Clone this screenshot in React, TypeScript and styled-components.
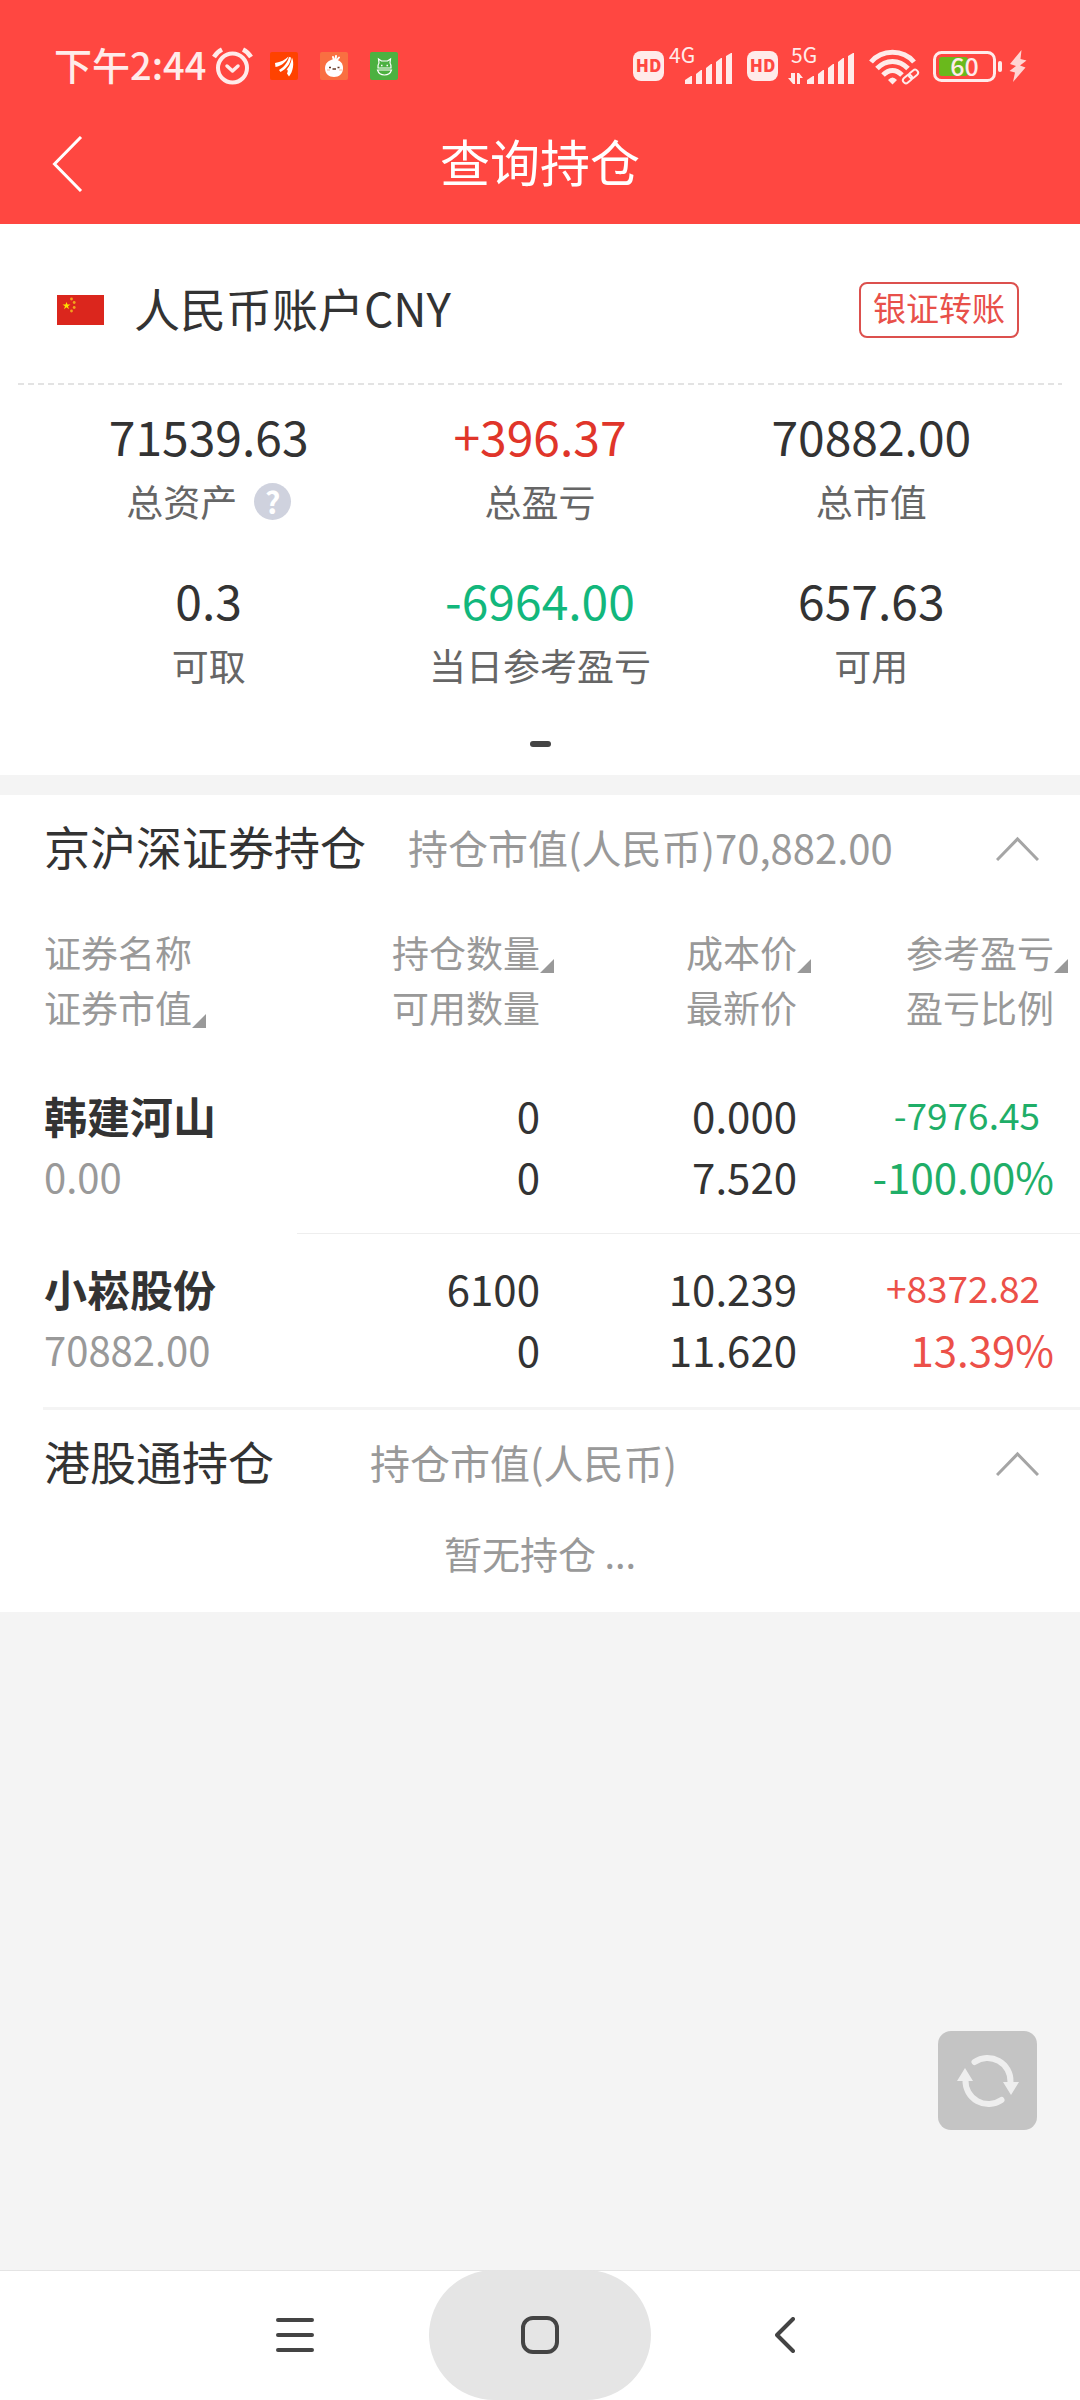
import React from "react";
import styled, { createGlobalStyle } from "styled-components";

const Global = createGlobalStyle`
  *, *::before, *::after { box-sizing: border-box; }
  html, body { margin: 0; padding: 0; background: #f4f4f4; }
  body { font-family: "Noto Sans CJK SC", sans-serif; color: #333; }
  button { font: inherit; color: inherit; background: none; border: 0; padding: 0; margin: 0; cursor: pointer; }
  h1, h2, p, dl, dd, dt { margin: 0; font-weight: 400; }
  svg { display: block; flex: none; }
`;

const Page = styled.div`
  min-height: 100vh;
  display: flex;
  flex-direction: column;
`;

const Header = styled.header`
  background: #ff4741;
  color: #fff;
`;

const StatusBar = styled.div`
  height: 104px;
  padding: 28px 53px 0 54px;
  display: flex;
  align-items: center;
  justify-content: space-between;
  color: #ffebea;
`;

const StatusGroup = styled.div<{ $gap: number }>`
  display: flex;
  align-items: center;
  gap: ${(p) => p.$gap}px;
`;

const Clock = styled.span`
  padding-bottom: 4px;
  font-size: 38px;
  line-height: 44px;
  font-weight: 500;
  margin-right: 6px;
`;

const AppIcons = styled.div`
  display: flex;
  gap: 22px;
  margin-left: 17px;
`;

const HdBadge = styled.span`
  width: 31px;
  height: 30px;
  border-radius: 8px;
  background: #ffebea;
  color: #ff4741;
  font-size: 17px;
  line-height: 28px;
  font-weight: 900;
  text-align: center;
`;

const TitleBar = styled.div`
  height: 120px;
  padding: 0 48px;
  display: grid;
  grid-template-columns: 80px 1fr 80px;
  align-items: center;
`;

const BackButton = styled.button`
  height: 80px;
  display: flex;
  align-items: center;
`;

const PageTitle = styled.h1`
  padding-bottom: 8px;
  font-size: 50px;
  line-height: 64px;
  text-align: center;
`;

const Card = styled.section`
  background: #fff;
`;

const AccountRow = styled.div`
  height: 159px;
  padding: 13px 61px 0 57px;
  display: flex;
  align-items: center;
`;

const AccountName = styled.h2`
  flex: 1;
  margin-left: 30px;
  padding-bottom: 7px;
  font-size: 46px;
  line-height: 60px;
`;

const TransferButton = styled.button`
  height: 56px;
  width: 160px;
  padding-bottom: 6px;
  border: 2px solid #dc504d;
  border-radius: 8px;
  color: #e8504a;
  font-size: 33px;
  line-height: 46px;
`;

const DashedRule = styled.div`
  height: 2px;
  margin: 0 18px;
  background: repeating-linear-gradient(90deg, #e3e3e3 0 6px, transparent 6px 10px);
`;

const Figures = styled.dl`
  display: grid;
  grid-template-columns: repeat(3, 1fr);
  row-gap: 32px;
  padding: 18px 43px 0;
`;

const Figure = styled.div`
  display: flex;
  flex-direction: column-reverse;
  align-items: center;
`;

const FigureLabel = styled.dt`
  display: flex;
  align-items: center;
  gap: 17px;
  font-size: 37px;
  line-height: 68px;
  color: #666;
`;

const FigureValue = styled.dd<{ $color?: string }>`
  font-size: 48px;
  line-height: 64px;
  color: ${(p) => p.$color ?? "#333"};
`;

const HelpButton = styled.button`
  width: 37px;
  height: 37px;
  border-radius: 50%;
  background: #cfd2de;
  color: #fff;
  font-size: 30px;
  line-height: 34px;
  font-weight: 700;
`;

const PagerDot = styled.div`
  width: 21px;
  height: 6px;
  margin: 42px auto 0;
  border-radius: 3px;
  background: #444;
`;

const SummaryCard = styled(Card)`
  padding-bottom: 28px;
  margin-bottom: 20px;
`;

const SectionToggle = styled.button`
  width: 100%;
  height: 106px;
  padding: 0 41px 0 44px;
  display: flex;
  align-items: center;
  text-align: left;
`;

const SectionTitle = styled.span<{ $gap: number }>`
  margin-right: ${(p) => p.$gap}px;
  padding-bottom: 7px;
  font-size: 46px;
  line-height: 60px;
`;

const SectionNote = styled.span`
  flex: 1;
  padding-bottom: 2px;
  font-size: 40px;
  line-height: 60px;
  color: #999;
`;

const Holdings = styled.table`
  width: 100%;
  table-layout: fixed;
  border-collapse: separate;
  border-spacing: 0;
`;

const Col = styled.col<{ $w: string }>`
  width: ${(p) => p.$w};
`;

const HeadCell = styled.th`
  padding: 24px 0 26px;
  font-size: 37px;
  line-height: 55px;
  font-weight: 400;
  text-align: right;
  color: #999;
  &:first-child { padding-left: 44px; text-align: left; }
  &:last-child { padding-right: 26px; }
`;

const HeadLine = styled.div`
  height: 55px;
`;

const SortButton = styled.button`
  position: relative;
  display: inline-block;
  line-height: 55px;
  &::after {
    content: "";
    position: absolute;
    left: 100%;
    bottom: 7px;
    width: 14px;
    height: 14px;
    background: #999;
    clip-path: polygon(100% 0, 100% 100%, 0 100%);
  }
`;

const Cell = styled.td`
  padding: 23px 0 27px;
  font-size: 42px;
  line-height: 61px;
  text-align: right;
  vertical-align: top;
  border-bottom: 1px solid #eee;
  tr:last-child > & { border-bottom-color: transparent; }
  &:last-child { padding-right: 26px; }
`;

const NameCell = styled.th`
  padding: 24px 0 26px 44px;
  text-align: left;
  vertical-align: top;
  font-weight: 400;
`;

const StockName = styled.div`
  height: 61px;
  font-size: 43px;
  line-height: 61px;
  font-weight: 700;
`;

const StockValue = styled.div`
  height: 61px;
  font-size: 40px;
  line-height: 61px;
  color: #999;
`;

const Amount = styled.div`
  height: 61px;
`;

const Profit = styled.div<{ $up: boolean }>`
  height: 61px;
  color: ${(p) => (p.$up ? "#ec5049" : "#1fae68")};
`;

const ProfitAmount = styled(Profit)`
  padding-right: 14px;
  font-size: 37px;
`;

const SectionRule = styled.div`
  height: 3px;
  margin-left: 43px;
  background: #f4f4f4;
`;

const Empty = styled.p`
  height: 96px;
  font-size: 38px;
  line-height: 74px;
  text-align: center;
  color: #999;
`;

const RefreshButton = styled.button`
  position: fixed;
  right: 43px;
  bottom: 270px;
  width: 99px;
  height: 99px;
  border-radius: 13px;
  background: #c4c4c4;
  display: grid;
  place-items: center;
`;

const SystemNav = styled.nav`
  position: sticky;
  bottom: 0;
  height: 130px;
  margin-top: auto;
  padding: 0 16%;
  display: grid;
  grid-template-columns: repeat(3, 1fr);
  justify-items: center;
  background: #fff;
  box-shadow: inset 0 1px 0 #e4e4e4;
  color: #444;
`;

const NavButton = styled.button<{ $active?: boolean }>`
  width: 222px;
  height: 130px;
  border-radius: 65px;
  background: ${(p) => (p.$active ? "#e5e5e5" : "transparent")};
  display: grid;
  place-items: center;
`;

const AlarmIcon = () => (
  <svg width="41" height="38" viewBox="0 0 41 38" fill="none" stroke="currentColor" strokeWidth="4">
    <circle cx="20.500" cy="21" r="14.500" />
    <path d="M2 10Q5 5 10 2.500M39 10Q36 5 31 2.500" strokeWidth="4.500" />
    <path d="M15 19l5.500 5 5.500-5" strokeWidth="3.500" strokeLinecap="round" strokeLinejoin="round" />
  </svg>
);

const PlaneAppIcon = () => (
  <svg width="28" height="28" viewBox="0 0 28 28">
    <rect width="28" height="28" rx="2" fill="#ff4200" />
    <path d="M5 11C11 10 15 8 18.500 4.500C17 9 12 14 5.500 15Z" fill="#fff" />
    <path d="M19 5L21 5.500C20.500 12 16 17 10.500 20L9 18C14 15 18 10 19 5Z" fill="#fff" />
    <path d="M22 5.500C24.500 11 23 20 19 24.500L17 21.500C18 19 18 18.500 17 17.500L13.500 21C18 17 21 12 22 5.500Z" fill="#fff" />
  </svg>
);

const RadishAppIcon = () => (
  <svg width="28" height="28" viewBox="0 0 28 28">
    <rect width="28" height="28" rx="2" fill="#f96f41" />
    <path d="M14 8L13 5M15.500 8L16 4M17 8L19 5.500" stroke="#fff" strokeWidth="2" strokeLinecap="round" />
    <path d="M14 7C20 8 23 11 23 16C23 22 19 25 14 25C9 25 5 22 5 16C5 11 9 8 14 7Z" fill="#fff" />
    <path d="M9 15.500h2M17.500 15.500h2M12.500 17h3.500" stroke="#663a28" strokeWidth="1.500" />
    <path d="M7 18h3M19 18h3" stroke="#ffb49a" strokeWidth="1" />
  </svg>
);

const BearAppIcon = () => (
  <svg width="28" height="28" viewBox="0 0 28 28">
    <rect width="28" height="28" rx="2" fill="#4cb141" />
    <path d="M8 16Q7.500 13 9 11L8.500 7L11.500 9H17.500L20.500 7L20 11Q21.500 13 21 16Z" fill="none" stroke="#fff" strokeWidth="1.200" />
    <path d="M7.500 18Q9 23 14.500 23T21.500 18Z" fill="none" stroke="#fff" strokeWidth="1.200" />
    <path d="M11 13.500h1.500M16.500 13.500h1.500" stroke="#fff" strokeWidth="1.500" />
  </svg>
);

const SignalIcon = ({ label, data }: { label: string; data?: boolean }) => (
  <svg width={data ? 68 : 65} height="54" viewBox={data ? "-3 -8 68 54" : "0 -8 65 54"} fill="currentColor">
    <text x="0" y="16" fontSize="21">{label}</text>
    {data && <path d="M-3 31H0V26H4V37H2ZM6 26h2l4 5h-3v6H6Z" />}
    <path d="M16 37v-4l6-4h1v8ZM27 37V27l5-4h1v14ZM37 37V21l5-4h1v20ZM47 37V15l5-4h1v26ZM57 37V9l5-3h1v31Z" />
  </svg>
);

const WifiIcon = () => (
  <svg width="51" height="38" viewBox="0 0 51 38" fill="none" stroke="currentColor" strokeWidth="5">
    <path d="M2 15C13 2 34 2 45 15M8 21.500C17 12 30 12 39 21.500M14 28C20 22 27 22 33 28" />
    <path d="M23.500 37.500L19 33Q23.500 28 28 33Z" fill="currentColor" stroke="none" />
    <path d="M36 35l12-11" stroke="#ff4741" strokeWidth="9" />
    <g strokeWidth="2">
      <rect x="33.500" y="29" width="10" height="6" rx="3" transform="rotate(-40 38.500 32)" />
      <rect x="39.500" y="24" width="10" height="6" rx="3" transform="rotate(-40 44.500 27)" />
    </g>
  </svg>
);

const BatteryIcon = () => (
  <svg width="70" height="43" viewBox="0 -6 70 43">
    <rect x="1.500" y="1.500" width="60" height="28" rx="7" fill="none" stroke="currentColor" strokeWidth="3" />
    <rect x="6" y="6" width="29" height="19" rx="3" fill="#6ab91c" />
    <rect x="65" y="10" width="4" height="11" rx="2" fill="currentColor" />
    <text x="31.500" y="25" textAnchor="middle" fontWeight="500" fontSize="25" fill="currentColor">60</text>
  </svg>
);

const BoltIcon = () => (
  <svg width="18" height="32" viewBox="0 0 18 32" fill="#ffd5d3">
    <path d="M12.500 0L1 14l6 2-6.500 5 5.500 1.500-2 9.500L16.500 17.500 11 15.500l6.500-5-6-1.500Z" />
  </svg>
);

const Chevron = () => (
  <svg width="43" height="26" viewBox="0 0 43 26" fill="none" stroke="#a5a5a5" strokeWidth="3">
    <path d="M1 25L21.500 4L42 25" />
  </svg>
);

const Flag = () => (
  <svg width="47" height="30" viewBox="0 0 47 30" role="img" aria-label="中国">
    <rect width="47" height="30" fill="#db261d" />
    <path d="M9.500 7l1 2.500h3l-2.500 1.700 1 3-2.500-1.900-2.500 1.900 1-3-2.500-1.700h3Z" fill="#fce100" />
    <g fill="#f2a41c">
      <circle cx="14.500" cy="4" r="1.400" />
      <circle cx="17.200" cy="7.500" r="1.400" />
      <circle cx="17.200" cy="12.500" r="1.400" />
      <circle cx="14.500" cy="16" r="1.400" />
    </g>
  </svg>
);

const figures = [
  { label: "总资产", value: "71539.63", help: true },
  { label: "总盈亏", value: "+396.37", color: "#e0352a" },
  { label: "总市值", value: "70882.00" },
  { label: "可取", value: "0.3" },
  { label: "当日参考盈亏", value: "-6964.00", color: "#12b77c" },
  { label: "可用", value: "657.63" },
];

const columns = [
  { top: "证券名称", bottom: "证券市值", sort: "bottom" },
  { top: "持仓数量", bottom: "可用数量", sort: "top" },
  { top: "成本价", bottom: "最新价", sort: "top" },
  { top: "参考盈亏", bottom: "盈亏比例", sort: "top" },
];

const stocks = [
  { name: "韩建河山", value: "0.00", held: "0", free: "0", cost: "0.000", price: "7.520", profit: "-7976.45", ratio: "-100.00%", up: false },
  { name: "小崧股份", value: "70882.00", held: "6100", free: "0", cost: "10.239", price: "11.620", profit: "+8372.82", ratio: "13.39%", up: true },
];

export default function App() {
  return (
    <Page>
      <Global />
      <Header>
        <StatusBar>
          <StatusGroup $gap={0}>
            <Clock>下午2:44</Clock>
            <AlarmIcon />
            <AppIcons>
              <PlaneAppIcon />
              <RadishAppIcon />
              <BearAppIcon />
            </AppIcons>
          </StatusGroup>
          <StatusGroup $gap={13}>
            <StatusGroup $gap={5}>
              <HdBadge>HD</HdBadge>
              <SignalIcon label="4G" />
            </StatusGroup>
            <StatusGroup $gap={10}>
              <HdBadge>HD</HdBadge>
              <SignalIcon label="5G" data />
            </StatusGroup>
            <WifiIcon />
            <StatusGroup $gap={6}>
              <BatteryIcon />
              <BoltIcon />
            </StatusGroup>
          </StatusGroup>
        </StatusBar>
        <TitleBar>
          <BackButton aria-label="返回">
            <svg width="36" height="56" viewBox="0 0 36 56" fill="none" stroke="#fff" strokeWidth="3">
              <path d="M33 1L6.500 28L33 55" />
            </svg>
          </BackButton>
          <PageTitle>查询持仓</PageTitle>
        </TitleBar>
      </Header>

      <main>
        <SummaryCard>
          <AccountRow>
            <Flag />
            <AccountName>人民币账户CNY</AccountName>
            <TransferButton>银证转账</TransferButton>
          </AccountRow>
          <DashedRule />
          <Figures>
            {figures.map((f) => (
              <Figure key={f.label}>
                <FigureLabel>
                  {f.label}
                  {f.help && <HelpButton>?</HelpButton>}
                </FigureLabel>
                <FigureValue $color={f.color}>{f.value}</FigureValue>
              </Figure>
            ))}
          </Figures>
          <PagerDot />
        </SummaryCard>

        <Card>
          <SectionToggle aria-expanded="true">
            <SectionTitle $gap={42}>京沪深证券持仓</SectionTitle>
            <SectionNote>持仓市值(人民币)70,882.00</SectionNote>
            <Chevron />
          </SectionToggle>
          <Holdings>
            <colgroup>
              <Col $w="27.5%" />
              <Col $w="22.5%" />
              <Col $w="23.8%" />
              <Col $w="26.2%" />
            </colgroup>
            <thead>
              <tr>
                {columns.map((c) => (
                  <HeadCell key={c.top} scope="col">
                    <HeadLine>{c.sort === "top" ? <SortButton>{c.top}</SortButton> : c.top}</HeadLine>
                    <HeadLine>{c.sort === "bottom" ? <SortButton>{c.bottom}</SortButton> : c.bottom}</HeadLine>
                  </HeadCell>
                ))}
              </tr>
            </thead>
            <tbody>
              {stocks.map((s) => (
                <tr key={s.name}>
                  <NameCell scope="row">
                    <StockName>{s.name}</StockName>
                    <StockValue>{s.value}</StockValue>
                  </NameCell>
                  <Cell>
                    <Amount>{s.held}</Amount>
                    <Amount>{s.free}</Amount>
                  </Cell>
                  <Cell>
                    <Amount>{s.cost}</Amount>
                    <Amount>{s.price}</Amount>
                  </Cell>
                  <Cell>
                    <ProfitAmount $up={s.up}>{s.profit}</ProfitAmount>
                    <Profit $up={s.up}>{s.ratio}</Profit>
                  </Cell>
                </tr>
              ))}
            </tbody>
          </Holdings>
          <SectionRule />
          <SectionToggle aria-expanded="true">
            <SectionTitle $gap={96}>港股通持仓</SectionTitle>
            <SectionNote>持仓市值(人民币)</SectionNote>
            <Chevron />
          </SectionToggle>
          <Empty>暂无持仓 ...</Empty>
        </Card>
      </main>

      <RefreshButton aria-label="刷新">
        <svg width="62" height="56" viewBox="0 0 62 56" fill="none" stroke="#eee" strokeWidth="6" strokeLinecap="round">
          <path d="M17.500 9A23 23 0 0 1 53.500 29" />
          <path d="M44.500 47A23 23 0 0 1 8.500 27" />
          <path d="M46 29H62L54 42ZM0 28H16L8 15Z" fill="#eee" stroke="none" />
        </svg>
      </RefreshButton>

      <SystemNav aria-label="系统导航">
        <NavButton aria-label="最近任务">
          <svg width="38" height="36" viewBox="0 0 38 36" stroke="currentColor" strokeWidth="4" strokeLinecap="round">
            <path d="M2 3H36M2 18H36M2 33H36" />
          </svg>
        </NavButton>
        <NavButton aria-label="主屏幕" $active>
          <svg width="38" height="38" viewBox="0 0 38 38" fill="none" stroke="currentColor" strokeWidth="4">
            <rect x="2" y="2" width="34" height="34" rx="10" />
          </svg>
        </NavButton>
        <NavButton aria-label="返回上一页">
          <svg width="20" height="36" viewBox="0 0 20 36" fill="none" stroke="currentColor" strokeWidth="4" strokeLinecap="round" strokeLinejoin="round">
            <path d="M18 2L2 18L18 34" />
          </svg>
        </NavButton>
      </SystemNav>
    </Page>
  );
}
